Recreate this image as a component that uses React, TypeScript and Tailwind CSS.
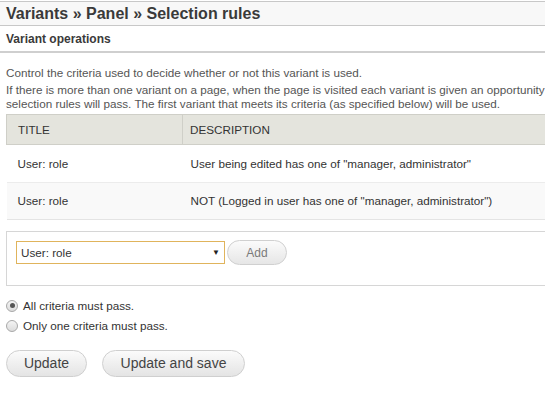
const rules = [
  { title: "User: role", description: 'User being edited has one of "manager, administrator"' },
  { title: "User: role", description: 'NOT (Logged in user has one of "manager, administrator")' },
];

export default function App() {
  return (
    <div className="h-[395px] w-[545px] overflow-hidden bg-white font-['Liberation_Sans',Arial,sans-serif] text-[#333]">
      <div className="w-[720px]">
        <div className="mt-px flex h-[25px] items-center border-y border-[#c8c8c8] bg-[#f8f8f8] px-[6px] text-[16px] font-bold text-[#3a3a3a]">
          Variants » Panel » Selection rules
        </div>
        <div className="flex h-[27px] items-center border-b-2 border-[#cfcfcf] px-[6px] text-[12px] font-bold text-[#3a3a3a]">
          Variant operations
        </div>

        <div className="px-[6px] pt-[12px]">
          <p className="text-[11.7px] leading-[15px] text-[#555]">
            Control the criteria used to decide whether or not this variant is used.
          </p>
          <p className="mt-[3px] whitespace-nowrap text-[11.7px] leading-[14px] text-[#555]">
            If there is more than one variant on a page, when the page is visited each variant is given an opportunity to be displayed. Each variant is checked to see if its
            <br />
            selection rules will pass. The first variant that meets its criteria (as specified below) will be used.
          </p>

          <table className="mt-[3px] w-full border-collapse text-[11.7px]">
            <thead>
              <tr className="h-[30px] bg-[#e4e4dd] text-left">
                <th className="w-[176px] border border-[#cfcfc8] pl-[11px] font-normal">TITLE</th>
                <th className="border border-[#cfcfc8] pl-[7px] font-normal">DESCRIPTION</th>
              </tr>
            </thead>
            <tbody>
              {rules.map((r, i) => (
                <tr
                  key={i}
                  className={i % 2 ? "h-[37px] border-b border-[#e4e4e4] bg-[#f9f9f9]" : "h-[38px] border-b border-[#ececec] bg-white"}
                >
                  <td className="pl-[11px]">{r.title}</td>
                  <td className="pl-[8px]">{r.description}</td>
                </tr>
              ))}
            </tbody>
          </table>

          <div className="mt-[11px] flex h-[55px] items-start gap-[2px] border border-[#d6d6d6] px-[9px] pt-[9px]">
            <div className="flex h-[23px] w-[209px] items-center justify-between border border-[#e0b45c] bg-white pl-[4px] pr-[4px] text-[11.7px]">
              <span>User: role</span>
              <span className="text-[8px] text-[#222]">▼</span>
            </div>
            <button className="h-[25px] w-[60px] -translate-y-px rounded-full border border-[#d0d0d0] bg-gradient-to-b from-[#fbfbfb] to-[#e6e6e6] text-[12px] text-[#7a7a7a]">
              Add
            </button>
          </div>

          <div className="mt-[12px] flex flex-col gap-[5px] text-[11.7px] leading-[15px]">
            <label className="flex items-center gap-[5px]">
              <span className="flex h-[12px] w-[12px] items-center justify-center rounded-full border border-[#a8a8a8] bg-gradient-to-b from-[#f4f4f4] to-[#dcdcdc]">
                <span className="h-[5px] w-[5px] rounded-full bg-[#555]" />
              </span>
              All criteria must pass.
            </label>
            <label className="flex items-center gap-[5px]">
              <span className="h-[12px] w-[12px] rounded-full border border-[#a8a8a8] bg-gradient-to-b from-[#f4f4f4] to-[#dcdcdc]" />
              Only one criteria must pass.
            </label>
          </div>

          <div className="mt-[17px] flex gap-[15px]">
            <button className="h-[27px] w-[81px] rounded-full border border-[#cfcfcf] bg-gradient-to-b from-[#fbfbfb] to-[#e4e4e4] text-[14px] text-[#444]">
              Update
            </button>
            <button className="h-[27px] w-[143px] rounded-full border border-[#cfcfcf] bg-gradient-to-b from-[#fbfbfb] to-[#e4e4e4] text-[14px] text-[#444]">
              Update and save
            </button>
          </div>
        </div>
      </div>
    </div>
  );
}
